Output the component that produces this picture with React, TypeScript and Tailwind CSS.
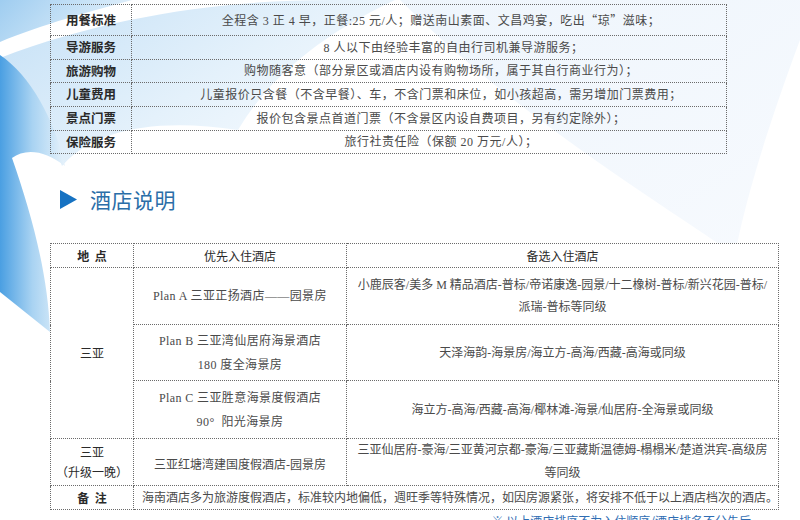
import React from 'react';

const cell = 'border border-dotted border-[#6b6b6b]';
const body = "font-['Liberation_Serif','Noto_Sans_CJK_SC',serif] text-[12px] text-[#4a4a4a]";
const label = "font-['Noto_Sans_CJK_SC',sans-serif] font-bold text-[12.5px] text-[#2a2a2a]";
const cjk = "font-['Noto_Sans_CJK_SC',sans-serif]";

const services = [
  {
    name: '用餐标准',
    text: (
      <>
        全程含 3 正 4 早，正餐:25 元/人；赠送南山素面、文昌鸡宴，吃出<span className={cjk}>“</span>琼<span className={cjk}>”</span>滋味；
      </>
    ),
    h: 'h-[31px]',
  },
  { name: '导游服务', text: '\u3000\u30008 人以下由经验丰富的自由行司机兼导游服务；', h: 'h-[24px]' },
  { name: '旅游购物', text: '购物随客意（部分景区或酒店内设有购物场所，属于其自行商业行为）；', h: 'h-[23px]' },
  { name: '儿童费用', text: '儿童报价只含餐（不含早餐）、车，不含门票和床位，如小孩超高，需另增加门票费用；', h: 'h-[24px]' },
  { name: '景点门票', text: '报价包含景点首道门票（不含景区内设自费项目，另有约定除外）；', h: 'h-[24px]' },
  { name: '保险服务', text: '旅行社责任险（保额 20 万元/人）；', h: 'h-[23px]' },
];

function Backdrop() {
  return (
    <svg className="absolute inset-0 h-full w-full" viewBox="0 0 800 520" preserveAspectRatio="none">
      <defs>
        <linearGradient id="g1" x1="0" y1="0" x2="1" y2="0.3">
          <stop offset="0" stopColor="#9fcdf0" />
          <stop offset="1" stopColor="#e2f0fb" />
        </linearGradient>
        <linearGradient id="g2" x1="0" y1="0" x2="1" y2="0.6">
          <stop offset="0" stopColor="#c4e0f6" />
          <stop offset="0.6" stopColor="#e4f1fb" />
          <stop offset="1" stopColor="#f6fafe" />
        </linearGradient>
        <linearGradient id="g3" x1="0" y1="0" x2="1" y2="0">
          <stop offset="0" stopColor="#4a9fe2" />
          <stop offset="0.5" stopColor="#a9d3f2" />
          <stop offset="1" stopColor="#e6f2fb" />
        </linearGradient>
        <linearGradient id="g4" x1="0" y1="0" x2="1" y2="1">
          <stop offset="0" stopColor="#eef5fc" />
          <stop offset="1" stopColor="#f7fafe" />
        </linearGradient>
      </defs>
      <path d="M400,0 H800 V40 C770,120 745,200 735,255 C640,190 510,110 400,0 Z" fill="url(#g4)" />
      <path d="M0,0 H132 C95,10 40,25 0,42 Z" fill="url(#g1)" />
      <path d="M0,58 C110,15 230,0 330,0 H395 C310,40 265,85 238,130 C160,118 95,128 62,166 C45,120 25,95 0,85 Z" fill="url(#g2)" />
      <path d="M0,55 C30,75 55,120 65,166 C45,150 25,148 12,158 C32,215 48,275 50,332 L0,292 Z" fill="url(#g3)" />
    </svg>
  );
}

export default function App() {
  return (
    <div className="relative w-[800px] h-[520px] overflow-hidden bg-white">
      <Backdrop />
      <div className="relative flex flex-col pl-[50px] pt-[4px]">
        <table className="w-[677px] border-collapse">
          <tbody>
            {services.map((s) => (
              <tr key={s.name} className={s.h}>
                <td className={`${cell} ${label} w-[81px] text-center`}>{s.name}</td>
                <td className={`${cell} ${body} pl-6 text-center tracking-[0.5px]`}>{s.text}</td>
              </tr>
            ))}
          </tbody>
        </table>

        <div className="mt-[33px] flex items-center gap-[13px] pl-[10px]">
          <svg width="17" height="19" viewBox="0 0 17 19">
            <path d="M0,0 L17,9.5 L0,19 Z" fill="#1672c2" />
          </svg>
          <h2 className="font-['Noto_Sans_CJK_SC',sans-serif] text-[21px] leading-[24px] tracking-[0.5px] text-[#2b6ea8]">酒店说明</h2>
        </div>

        <table className="mt-[32px] w-[729px] border-collapse bg-white">
          <tbody>
            <tr className="h-[24px]">
              <td className={`${cell} ${label} w-[83px] text-center text-[12px]`}>地&nbsp;&nbsp;点</td>
              <td className={`${cell} ${label} w-[213px] text-center text-[12px] font-normal text-[#1a1a1a]`}>优先入住酒店</td>
              <td className={`${cell} ${label} text-center text-[12px] font-normal text-[#1a1a1a]`}>备选入住酒店</td>
            </tr>
            <tr className="h-[57px]">
              <td rowSpan={3} className={`${cell} ${label} text-center text-[12px] font-normal text-[#1a1a1a]`}>三亚</td>
              <td className={`${cell} ${body} text-center tracking-[0.4px]`}>Plan A 三亚正扬酒店——园景房</td>
              <td className={`${cell} ${body} px-1 text-center leading-[22px]`}>
                小鹿辰客/美多 M 精品酒店-普标/帝诺康逸-园景/十二橡树-普标/新兴花园-普标/
                <br />
                派瑞-普标等同级
              </td>
            </tr>
            <tr className="h-[56px]">
              <td className={`${cell} ${body} text-center leading-[24px] tracking-[0.4px]`}>
                Plan B 三亚湾仙居府海景酒店
                <br />
                180 度全海景房
              </td>
              <td className={`${cell} ${body} text-center`}>天泽海韵-海景房/海立方-高海/西藏-高海或同级</td>
            </tr>
            <tr className="h-[58px]">
              <td className={`${cell} ${body} text-center leading-[24px] tracking-[0.4px]`}>
                Plan C 三亚胜意海景度假酒店
                <br />
                90°&nbsp;&nbsp;阳光海景房
              </td>
              <td className={`${cell} ${body} text-center`}>海立方-高海/西藏-高海/椰林滩-海景/仙居府-全海景或同级</td>
            </tr>
            <tr className="h-[47px]">
              <td className={`${cell} ${label} text-center text-[12px] font-normal leading-[20px] text-[#1a1a1a]`}>
                三亚
                <br />
                （升级一晚）
              </td>
              <td className={`${cell} ${body} pt-[6px] text-center`}>三亚红塘湾建国度假酒店-园景房</td>
              <td className={`${cell} ${body} px-1 text-center leading-[23px]`}>
                三亚仙居府-豪海/三亚黄河京都-豪海/三亚藏斯温德姆-榻榻米/楚道洪宾-高级房
                <br />
                等同级
              </td>
            </tr>
            <tr className="h-[24px]">
              <td className={`${cell} ${label} text-center text-[12px]`}>备&nbsp;&nbsp;注</td>
              <td colSpan={2} className={`${cell} ${body} whitespace-nowrap pl-[8px] text-left`}>
                海南酒店多为旅游度假酒店，标准较内地偏低，週旺季等特殊情况，如因房源紧张，将安排不低于以上酒店档次的酒店。
              </td>
            </tr>
          </tbody>
        </table>

        <p className="mt-[4px] w-[729px] pr-[28px] text-right font-['Noto_Sans_CJK_SC',sans-serif] text-[12px] leading-[14px] text-[#2f6db3]">
          ※ 以上酒店排序不为入住顺序/酒店排名不分先后
        </p>
      </div>
    </div>
  );
}
